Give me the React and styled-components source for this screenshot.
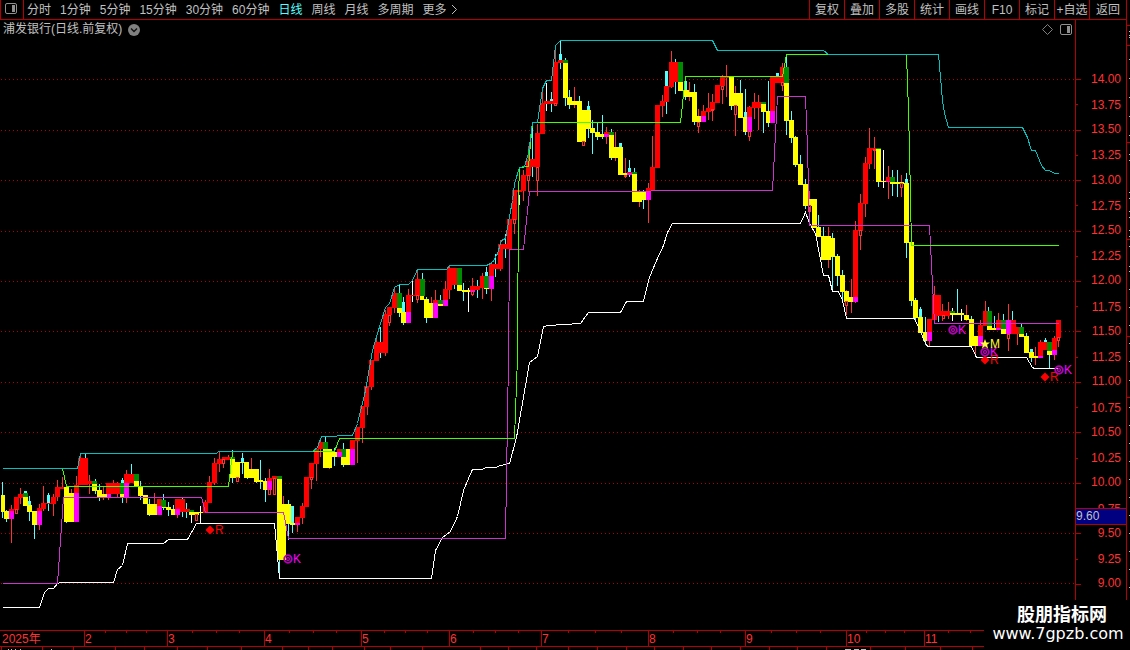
import styled, { createGlobalStyle } from "styled-components";

const PERIODS = [
  "分时",
  "1分钟",
  "5分钟",
  "15分钟",
  "30分钟",
  "60分钟",
  "日线",
  "周线",
  "月线",
  "多周期",
];

const TOOLS = ["复权", "叠加", "多股", "统计", "画线", "F10", "标记", "+自选", "返回"];

// 14.00 down to 9.00 in steps of 0.25
const PRICES = Array.from({ length: 21 }, (_, i) => (14 - i * 0.25).toFixed(2));

const MONTHS = ["2025年", "2", "3", "4", "5", "6", "7", "8", "9", "10", "11", ""];

// chart coordinates
const VIEW = { top: 38, width: 1075, height: 592 };

const GRID = [79, 130, 180, 231, 281, 331, 382, 432, 483, 533, 583];

// wick: "x top bottom"
const WICKS = [
  {
    color: "#ff3232",
    data: `11 505 543,16 504 514,20 488 504,39 504 530,43 486 511,53 494 516,57 480 501,62 477 487,71 489 493,
      76 476 485,80 455 458,89 475 494,103 486 500,108 490 500,113 480 494,117 482 497,126 470 503,154 493 504,
      159 499 515,177 509 518,205 500 512,209 476 485,214 458 485,219 452 472,223 457 468,228 455 460,251 458 469,
      269 469 482,283 496 505,297 522 532,302 503 524,311 463 489,316 448 481,320 440 457,329 449 469,357 427 463,
      362 420 443,367 400 415,371 386 390,376 336 342,385 310 356,389 308 326,394 289 313,408 289 296,417 271 303,
      431 297 304,435 290 300,445 281 289,449 265 299,472 278 296,482 273 299,491 262 301,500 240 271,514 200 234,
      523 170 201,528 146 192,537 124 196,542 90 104,555 46 104,574 87 108,606 127 144,615 132 161,625 158 178,
      639 190 207,648 183 223,652 136 190,662 95 117,671 51 88,689 82 101,698 109 133,703 105 113,708 93 120,
      712 94 121,722 75 104,726 65 97,735 86 136,749 106 141,754 93 119,758 95 130,782 63 91,809 191 212,
      828 227 268,846 290 315,851 279 313,855 221 303,860 194 250,865 157 217,869 128 169,874 137 169,888 166 199,
      901 175 197,929 319 346,934 286 320,942 304 321,948 302 319,966 305 321,975 336 354,980 320 326,985 301 312,
      998 313 330,1008 304 351,1017 327 345,1035 347 365,1040 340 343,1054 336 360,1058 320 347`,
  },
  {
    color: "#54ffff",
    data: `2 482 518,6 510 522,25 491 497,29 496 521,34 511 539,48 493 511,66 487 523,85 453 458,95 479 494,
      99 484 501,122 478 503,131 464 481,140 481 500,149 499 516,163 494 510,168 502 516,173 505 511,182 498 517,
      186 503 518,232 450 483,242 453 474,247 462 479,256 470 483,260 460 489,265 478 502,279 560 574,288 500 540,
      292 506 533,325 436 442,334 448 466,343 443 467,380 327 358,399 285 317,403 297 325,422 273 279,426 297 323,
      440 295 300,454 284 289,463 283 301,477 280 298,486 267 294,495 254 277,505 234 258,532 127 177,551 92 112,
      560 41 69,565 58 106,569 90 109,579 96 103,588 101 138,592 120 154,597 123 140,602 115 139,611 129 160,
      629 160 177,634 168 174,643 190 209,666 71 114,675 59 94,685 81 100,694 84 125,731 77 110,740 80 118,745 89 135,
      763 102 133,768 81 127,786 57 135,791 111 143,795 136 167,800 155 184,805 179 209,818 215 237,823 227 240,
      832 233 290,837 254 286,842 270 301,878 149 187,892 170 196,897 170 197,906 173 258,911 242 306,915 298 320,
      920 307 320,925 317 345,938 311 322,957 289 313,971 316 320,988 307 312,994 316 330,1003 314 320,1012 311 320,
      1021 324 328,1026 333 337,1031 349 362,1045 338 342,1049 342 368`,
  },
  {
    color: "#ffffff",
    data: `191 513 523,200 506 523,412 281 302,468 288 312,519 195 205,546 83 111,883 150 188,952 308 321,961 309 321`,
  },
];

// body: "x y width height"
const BODIES = [
  {
    color: "#54ffff",
    data: `28 501 3 5,24 491 3 2,47 495 3 8,121 480 3 3,291 506 3 17,241 458 3 4,402 302 3 10,485 272 3 4,
      559 54 3 6,587 106 3 4,619 143 3 4,665 71 3 15,628 168 3 4,550 99 3 3,684 81 3 9,744 112 3 5,776 73 3 3,
      905 179 3 4,919 309 3 8,1030 349 3 3,1044 340 3 2`,
  },
  {
    color: "#ff0000",
    data: `9 509 5 2,14 497 5 13,18 494 5 4,37 508 5 3,41 503 5 6,46 503 5 1,51 497 5 7,55 487 5 10,59 487 5 2,
      74 485 5 8,78 458 10 27,83 481 9 3,106 483 14 11,124 474 10 9,157 499 5 7,175 499 10 10,180 509 10 3,
      203 502 5 11,207 482 5 21,212 463 5 20,217 459 5 5,222 457 8 3,267 478 5 3,272 476 5 3,295 517 5 6,
      300 506 5 12,304 477 5 30,309 463 5 15,314 449 5 15,318 442 5 7,337 449 5 3,350 440 5 9,355 427 5 14,
      360 406 5 22,364 386 5 21,369 360 5 27,374 342 5 19,379 342 5 11,383 314 5 39,387 307 5 8,392 293 5 15,
      406 295 5 17,411 295 5 1,415 279 5 17,433 300 5 3,443 289 5 11,447 268 10 17,447 285 5 5,470 286 10 4,
      480 276 4 12,489 264 5 12,494 264 4 5,498 244 5 25,503 244 5 5,507 219 5 30,512 190 5 30,517 190 5 2,
      521 175 5 16,526 159 5 17,531 159 9 8,535 133 5 34,540 103 5 31,544 101 10 3,553 62 5 42,558 60 5 3,
      604 132 5 2,627 172 5 2,646 188 5 4,650 167 5 23,655 105 5 63,660 101 5 5,664 86 5 16,669 62 9 20,
      669 82 5 5,701 111 5 5,706 108 5 4,710 102 5 8,715 85 5 18,720 76 5 10,725 76 4 2,747 107 5 10,752 102 9 6,
      770 77 5 34,775 77 5 6,780 67 4 16,853 230 5 67,858 203 5 28,863 163 5 41,867 148 5 16,872 148 4 2,
      886 177 4 4,927 319 5 13,932 295 5 25,937 295 4 21,941 311 9 5,978 325 5 11,983 311 4 15,996 320 5 8,
      1011 320 5 14,1015 327 4 7,1038 342 5 14,1043 342 4 8,1052 338 5 12,1056 320 5 18`,
  },
  {
    color: "#ffff00",
    data: `1 495 4 17,4 511 5 8,23 497 5 9,27 505 5 7,32 511 5 14,64 487 5 35,69 493 5 29,92 484 5 7,97 490 5 7,
      102 494 5 4,120 493 4 5,134 480 5 6,138 486 5 10,143 495 5 9,147 504 10 11,161 507 5 1,166 507 5 3,171 509 5 6,
      189 512 10 3,199 512 4 1,230 459 5 19,235 462 5 16,240 462 4 1,244 462 5 16,249 469 10 9,254 478 5 4,
      258 480 5 2,263 481 4 9,277 479 5 81,282 504 4 56,286 504 5 20,290 523 5 2,323 449 9 19,332 452 5 5,
      341 457 5 8,346 449 4 16,397 308 5 5,401 312 5 11,420 296 4 4,424 299 5 19,428 303 5 15,438 304 5 2,
      457 285 5 6,462 290 8 2,484 288 5 1,563 63 5 35,567 97 5 8,572 101 5 4,577 101 5 41,582 110 4 32,586 110 5 19,
      590 128 5 5,595 132 5 5,600 134 4 3,609 135 5 23,614 147 4 11,618 147 5 28,623 173 4 2,632 174 5 28,
      637 192 5 10,642 191 4 9,678 82 5 9,684 90 5 7,689 92 3 5,692 92 5 30,697 116 4 6,729 77 5 29,734 93 4 13,
      738 93 5 25,743 117 4 15,761 104 5 8,766 111 4 12,784 83 5 38,789 120 5 18,793 137 5 28,798 164 5 21,
      803 184 5 22,808 199 4 7,812 199 5 29,816 227 5 10,821 236 10 24,826 238 9 19,835 256 5 20,840 275 5 17,
      844 291 5 11,849 297 4 5,876 149 5 33,881 181 9 1,890 182 5 2,895 182 9 2,904 183 5 60,909 242 5 59,
      913 300 5 18,918 317 5 16,923 332 4 9,950 313 5 2,955 313 9 2,964 315 5 5,969 319 5 27,974 336 4 10,
      987 326 5 4,992 328 4 2,1001 329 5 5,1019 334 5 3,1024 336 5 17,1029 352 5 6,1034 356 4 2,1047 351 5 4`,
  },
  {
    color: "#008c00",
    data: `23 493 5 4,92 481 5 3,120 483 5 11,134 474 5 7,161 500 5 7,189 510 5 2,230 457 5 2,277 476 5 3,
      323 442 5 7,341 449 5 8,397 293 5 15,420 279 5 17,438 300 5 4,457 268 5 17,484 276 5 12,563 60 5 3,
      609 132 5 3,632 172 5 2,678 62 5 20,761 102 5 2,784 67 5 16,876 148 5 1,890 177 5 5,950 311 5 2,
      987 311 5 15,1001 320 5 9,1019 327 5 7,1047 342 5 9`,
  },
  {
    color: "#ff00ff",
    data: `9 511 5 8,37 511 5 14,74 493 5 29,107 494 4 4,124 483 5 15,157 506 5 9,175 509 5 6,267 481 5 9,
      295 523 5 2,337 452 5 5,350 449 5 16,406 312 5 11,433 303 5 15,443 300 5 6,470 290 5 2,489 276 5 13,
      604 134 5 3,627 173 5 2,646 192 5 8,701 116 5 6,747 117 5 15,770 111 5 12,853 297 5 5,886 181 4 1,
      927 332 5 9,978 336 5 10,996 328 5 2,1006 320 5 14,1038 356 5 2,1052 350 5 5`,
  },
];

// open ends below a body: "x y width height"
const HOLLOWS = `15 509 3 5,195 514 3 7,236 477 3 5,268 489 3 6,273 478 3 17,222 459 3 5,310 477 3 3,388 315 3 8,
  416 295 3 5,471 291 3 4,513 219 3 5,527 175 3 6,536 167 3 14,554 103 3 3,582 141 3 5,697 122 3 5,711 109 3 2,
  721 86 3 4,734 105 3 10,748 131 3 6,781 82 3 4,808 205 3 7,624 175 3 2,845 301 3 5,859 230 3 6,873 149 3 2,
  900 183 3 5,942 315 3 4,1007 334 3 5,1057 337 3 4`;

const LINES = [
  {
    color: "#ffffff",
    points: `2,607 39,607 44,592 48,588 53,588 57,583 60,582 113,582 117,569 122,565 127,543 163,543 168,539 187,539
      196,523 274,523 279,578 431,578 435,550 442,537 450,531 457,516 463,490 468,478 472,469 482,469 485,467
      495,467 500,465 509,463 516,437 529,362 537,356 543,326 548,325 580,323 588,312 620,312 626,301 643,301
      649,277 656,260 663,245 667,232 672,223 800,223 805,212 810,225 815,233 823,275 828,275 832,291 838,291
      842,300 846,318 914,318 926,345 928,346 971,346 976,357 1026,357 1032,367 1034,368 1058,368`,
  },
  {
    color: "#cc33cc",
    points: `2,583 57,583 63,497 201,497 205,512 283,512 288,538 505,538 508,357 509,249 523,249 529,191 650,191
      651,190 772,190 777,96 805,96 807,147 809,225 929,225 934,323 1058,323`,
  },
  {
    color: "#40ff00",
    points: `62,468 66,486 228,486 232,452 233,451 334,451 339,438 514,438 517,357 518,195 519,167 528,166 530,143
      532,122 680,122 685,76 782,76 786,54 906,54 908,110 909,150 911,245 1058,245`,
  },
  {
    color: "#00c0c0",
    points: `2,468 77,468 80,453 216,453 218,451 312,451 317,447 321,436 352,435 357,423 365,390 372,350 377,333
      385,307 389,303 394,287 399,284 408,284 412,280 417,269 446,269 449,265 486,265 492,262 497,253 501,240
      505,238 512,200 514,183 519,167 524,166 528,153 532,122 537,122 542,88 546,80 551,80 555,45 560,40 712,40
      717,50 823,50 828,54 938,54 942,100 944,113 948,127 1022,127 1027,137 1031,150 1035,150 1041,165 1045,170
      1049,170 1054,173 1058,173`,
  },
];

const MARKERS = [
  { type: "diamond", x: 210, y: 530, text: "R" },
  { type: "ring", x: 288, y: 559, text: "K" },
  { type: "ring", x: 953, y: 330, text: "K" },
  { type: "diamond", x: 985, y: 360, text: "R" },
  { type: "ring", x: 985, y: 352, text: "K" },
  { type: "star", x: 985, y: 344, text: "M" },
  { type: "diamond", x: 1045, y: 377, text: "R" },
  { type: "ring", x: 1059, y: 370, text: "K" },
];

const MARKER_COLORS = { diamond: "#ff0000", ring: "#ff00ff", star: "#ffff32" };

const STRIP_TICKS = [
  1, 42, 73, 115, 144, 177, 207, 241, 282, 308, 332, 364, 390, 422, 480, 508, 536, 568, 597, 626, 654, 683, 711, 740,
  769, 797, 826, 870, 905, 940, 972,
];

const EDGE_SPECKS = [
  31, 35, 37, 59, 78, 97, 116, 135, 154, 160, 192, 198, 211, 217, 230, 236, 246, 266, 271, 289, 307, 325, 343, 361,
  380, 407, 425, 443, 461, 479, 497, 515, 533, 551, 569, 587,
];

const parse = (data) => data.split(",").map((item) => item.trim().split(/\s+/).map(Number));

const rectPath = (data) =>
  parse(data)
    .map(([x, y, w, h]) => `M${x} ${y}h${w}v${h}h${-w}z`)
    .join("");

const wickPath = (data) =>
  parse(data)
    .map(([x, top, bottom]) => `M${x} ${top}h1v${bottom - top}h-1z`)
    .join("");

const hollowPath = (data) =>
  parse(data)
    .map(([x, y, w, h]) => `M${x + 0.5} ${y + 0.5}h${w - 1}v${h - 1}h${1 - w}z`)
    .join("");

const PanelIcon = () => (
  <svg width="12" height="11" viewBox="0 0 12 11" aria-hidden="true">
    <rect x="0.5" y="0.5" width="11" height="10" rx="1.5" fill="none" stroke="#909090" />
    <rect x="7" y="2" width="3" height="7" fill="#909090" />
  </svg>
);

const MarkerIcon = ({ type }) => (
  <svg width="10" height="10" viewBox="-5 -5 10 10" aria-hidden="true">
    {type === "diamond" && <path d="M0 -4.5L4.5 0L0 4.5L-4.5 0z" fill="#ff0000" />}
    {type === "ring" && (
      <g fill="none" stroke="#b400b4">
        <circle r="3.8" strokeWidth="1.8" />
        <circle r="1.5" strokeWidth="1.3" />
      </g>
    )}
    {type === "star" && (
      <path d="M0 -5L1.3 -1.6L5 -1.5L2.1 .8L3.1 4.4L0 2.3L-3.1 4.4L-2.1 .8L-5 -1.5L-1.3 -1.6z" fill="#ffff32" />
    )}
  </svg>
);

const Chart = () => (
  <Plot>
    <ChartSvg viewBox={`0 ${VIEW.top} ${VIEW.width} ${VIEW.height}`} preserveAspectRatio="none">
      {GRID.map((y) => (
        <line key={y} x1="1" x2={VIEW.width} y1={y + 0.5} y2={y + 0.5} stroke="#b40000" strokeDasharray="1 3" />
      ))}
      {WICKS.map(({ color, data }) => (
        <path key={color} d={wickPath(data)} fill={color} />
      ))}
      {BODIES.map(({ color, data }) => (
        <path key={color} d={rectPath(data)} fill={color} />
      ))}
      <path d={hollowPath(HOLLOWS)} fill="#000000" stroke="#ff3232" />
      <g transform="translate(0.5 0.5)">
        {LINES.map(({ color, points }) => (
          <polyline key={color} points={points} fill="none" stroke={color} />
        ))}
      </g>
    </ChartSvg>
    {MARKERS.map(({ type, x, y, text }) => (
      <Marker
        key={`${x}-${y}`}
        $color={MARKER_COLORS[type]}
        style={{
          left: `${((x - 5) / VIEW.width) * 100}%`,
          top: `${((y - 6 - VIEW.top) / VIEW.height) * 100}%`,
        }}
      >
        <MarkerIcon type={type} />
        {text}
      </Marker>
    ))}
  </Plot>
);

const App = () => {
  return (
    <>
      <GlobalStyle />
      <Page>
        <Main>
          <Toolbar>
            <PanelButton type="button" aria-label="panel">
              <PanelIcon />
            </PanelButton>
            <Periods>
              {PERIODS.map((period) => (
                <PeriodButton key={period} type="button" $active={period === "日线"}>
                  {period}
                </PeriodButton>
              ))}
              <PeriodButton type="button">
                更多
                <svg width="8" height="11" viewBox="0 0 8 11" aria-hidden="true">
                  <path d="M2 1L6.5 5.5L2 10" fill="none" stroke="#c0c0c0" />
                </svg>
              </PeriodButton>
            </Periods>
            <Tools>
              {TOOLS.map((tool) => (
                <ToolButton key={tool} type="button">
                  {tool}
                </ToolButton>
              ))}
            </Tools>
          </Toolbar>
          <Body>
            <ChartColumn>
              <TitleRow>
                <Title>浦发银行(日线.前复权)</Title>
                <svg width="12" height="12" viewBox="0 0 12 12" aria-hidden="true">
                  <circle cx="6" cy="6" r="6" fill="#808080" />
                  <path d="M3 4.5L6 7.5L9 4.5" fill="none" stroke="#101010" strokeWidth="1.4" />
                </svg>
                <TitleIcons>
                  <svg width="11" height="11" viewBox="0 0 11 11" aria-hidden="true">
                    <path d="M5.5 .5L10.5 5.5L5.5 10.5L.5 5.5z" fill="none" stroke="#808080" />
                  </svg>
                  <PanelIcon />
                </TitleIcons>
              </TitleRow>
              <Chart />
            </ChartColumn>
            <PriceAxis>
              {PRICES.map((price, i) => (
                <Price key={price} $minor={i % 2 === 1}>
                  {price}
                </Price>
              ))}
              <PriceTag>9.60</PriceTag>
            </PriceAxis>
          </Body>
          <TimeAxis>
            {MONTHS.map((month, i) => (
              <Month key={i} $divided={i > 0 && month !== ""}>
                {month}
              </Month>
            ))}
          </TimeAxis>
          <Strip viewBox="0 0 1126 3" preserveAspectRatio="none" aria-hidden="true">
            {STRIP_TICKS.map((x) => (
              <rect key={x} x={x} y="0" width="1" height="3" fill="#b40000" />
            ))}
            {[8, 11, 15, 20, 51].map((x) => (
              <rect key={x} x={x} y="2" width="1" height="1" fill="#c0c0c0" />
            ))}
            <path d="M845 2h6M854 2h5M861 2h5" stroke="#c0c0c0" />
          </Strip>
        </Main>
        <Edge viewBox="0 0 3 650" preserveAspectRatio="none" aria-hidden="true">
          {EDGE_SPECKS.map((y) => (
            <rect key={y} x="2" y={y} width="1" height="1" fill="#c0c0c0" />
          ))}
          {[25, 45, 142, 239, 336, 397].map((y) => (
            <rect key={y} x="0" y={y} width="3" height="1" fill="#b40000" />
          ))}
        </Edge>
        <Watermark>
          <SiteName>股朋指标网</SiteName>
          <SiteUrl>www.7gpzb.com</SiteUrl>
        </Watermark>
      </Page>
    </>
  );
};

export default App;

const GlobalStyle = createGlobalStyle`
  * {
    box-sizing: border-box;
  }

  body {
    margin: 0;

    background-color: #000000;
    color: #c0c0c0;
    font-family: "Liberation Sans", "Noto Sans CJK SC", sans-serif;
    font-size: 12px;
  }

  button {
    padding: 0;

    background: none;
    border: 0;
    color: inherit;
    font: inherit;
    white-space: nowrap;
  }

  svg {
    display: block;
    flex-shrink: 0;
  }
`;

const Page = styled.div`
  position: relative;
  display: flex;

  min-height: 100vh;
`;

const Main = styled.main`
  display: flex;
  flex-direction: column;
  flex: 1;

  min-width: 0;

  border-right: 1px solid #b40000;
`;

const Toolbar = styled.header`
  display: flex;

  height: 20px;

  border-bottom: 1px solid #b40000;
  border-left: 1px solid #b40000;
  line-height: 18px;
`;

const PanelButton = styled.button`
  display: flex;
  align-items: center;
  justify-content: center;

  width: 23px;
  padding-right: 2px;
  padding-bottom: 2px;

  border-right: 1px solid #b40000;
`;

const Periods = styled.nav`
  display: flex;
  gap: 9px;
  flex: 1;

  padding-left: 3px;
`;

const PeriodButton = styled.button`
  display: flex;
  align-items: center;
  gap: 3px;

  color: ${({ $active }) => ($active ? "#54ffff" : "#c0c0c0")};
`;

const Tools = styled.div`
  display: flex;
`;

const ToolButton = styled.button`
  width: 35px;

  border-left: 1px solid #b40000;

  &:last-child {
    width: 37px;
  }
`;

const Body = styled.section`
  display: flex;
  flex: 1;
`;

const ChartColumn = styled.div`
  display: flex;
  flex-direction: column;
  flex: 1;

  min-width: 0;
`;

const TitleRow = styled.div`
  display: flex;
  align-items: center;
  gap: 6px;

  height: 18px;
  padding: 1px 3px 0;
`;

const Title = styled.h1`
  margin: 0;

  font-size: 12px;
  font-weight: 400;
  line-height: 17px;
`;

const TitleIcons = styled.div`
  display: flex;
  gap: 7px;

  margin-left: auto;
`;

const Plot = styled.div`
  position: relative;
  flex: 1;
`;

const ChartSvg = styled.svg`
  position: absolute;
  inset: 0;

  width: 100%;
  height: 100%;

  shape-rendering: crispEdges;
`;

const Marker = styled.span`
  position: absolute;
  display: flex;
  align-items: center;

  color: ${({ $color }) => $color};
  font-size: 12px;
  line-height: 12px;
`;

const PriceAxis = styled.aside`
  position: relative;
  display: flex;
  flex-direction: column;

  width: 51px;
  padding: 47px 0 34px;

  border-left: 1px solid #b40000;
`;

const Price = styled.div`
  position: relative;
  display: flex;
  align-items: center;
  justify-content: flex-end;
  flex: 1;

  padding-top: ${({ $minor }) => ($minor ? "2px" : "0")};
  padding-right: 5px;

  color: #ff3232;
  line-height: 15px;

  &::before {
    content: "";
    position: absolute;
    top: 50%;
    left: 0;

    width: ${({ $minor }) => ($minor ? "2px" : "5px")};
    height: 1px;

    background-color: #b40000;
  }
`;

const PriceTag = styled.div`
  position: absolute;
  top: 80%;
  left: 0;
  right: 0;

  height: 17px;

  background-color: #000080;
  border-top: 1px solid #b40000;
  border-bottom: 1px solid #b40000;
  line-height: 15px;
`;

const TimeAxis = styled.div`
  display: grid;
  grid-template-columns: 84fr 83fr 97fr 97fr 88fr 92fr 107fr 97fr 101fr 78fr 92fr 110fr;

  height: 17px;

  border-top: 1px solid #b40000;
  border-bottom: 1px solid #b40000;
`;

const tick = "linear-gradient(#b40000, #b40000)";

const Month = styled.div`
  padding-left: ${({ $divided }) => ($divided ? "0" : "2px")};

  border-left: ${({ $divided }) => ($divided ? "1px solid #b40000" : "0")};
  background-image: ${({ $divided }) => ($divided ? `${tick}, ${tick}, ${tick}` : "none")};
  background-position: 25% 0, 50% 0, 75% 0;
  background-repeat: no-repeat;
  background-size: 1px 2px;
  color: #ff3232;
  line-height: 16px;
`;

const Strip = styled.svg`
  width: 100%;
  height: 3px;

  shape-rendering: crispEdges;
`;

const Edge = styled.svg`
  width: 3px;
  height: 100vh;

  shape-rendering: crispEdges;
`;

const Watermark = styled.footer`
  position: absolute;
  right: 0;
  bottom: 0;
  display: flex;
  flex-direction: column;
  align-items: center;

  width: 146px;
  height: 50px;
  padding-top: 5px;

  background-color: #000000;
  color: #ffffff;
`;

const SiteName = styled.strong`
  padding-left: 10px;

  font-size: 18px;
  line-height: 20px;
`;

const SiteUrl = styled.span`
  padding-left: 2px;

  font-family: "DejaVu Sans", sans-serif;
  font-size: 16px;
  line-height: 18px;
`;
